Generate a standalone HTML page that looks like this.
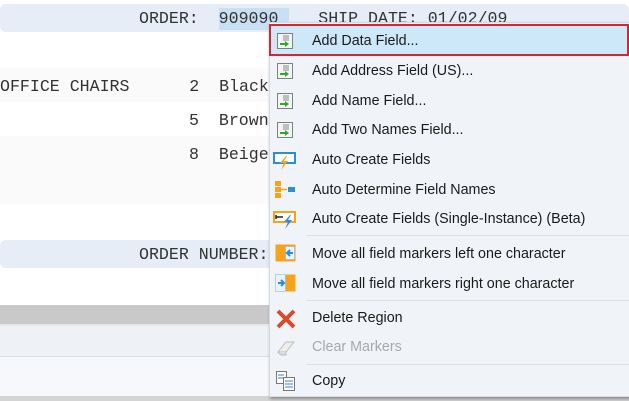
<!DOCTYPE html>
<html><head><meta charset="utf-8"><style>
*{margin:0;padding:0;box-sizing:border-box}
body{width:629px;height:401px;overflow:hidden;background:#fff;position:relative;font-family:"Liberation Sans",sans-serif}
.a{position:absolute}
.mono{font-family:"Liberation Mono",monospace;font-size:16.6px;color:#333;position:absolute;line-height:18px;white-space:pre}
.menu{position:absolute;left:269px;top:22px;width:362px;height:375px;background:#f0f4f9;border:1px solid #d6d9de;box-shadow:1px 2px 3px rgba(0,0,0,.35)}
.it{position:absolute;left:42px;font-size:14.3px;color:#1a1a1a;line-height:16px;font-family:"Liberation Sans","DejaVu Sans",sans-serif}
.sep{position:absolute;left:36px;right:0;height:1px;background:#dcdfe4}
.ic{position:absolute;left:6px}
</style></head><body>
<div class="a" style="left:0;top:4px;width:629px;height:28px;background:#e6edf6;border-radius:6px"></div>
<div class="a" style="left:0;top:68px;width:629px;height:34px;background:#fafafa"></div>
<div class="a" style="left:0;top:136px;width:629px;height:34px;background:#fafafa"></div>
<div class="a" style="left:0;top:170px;width:629px;height:34px;background:#fafafa"></div>
<div class="a" style="left:0;top:240px;width:629px;height:28px;background:#e6edf6;border-radius:6px"></div>
<div class="a" style="left:219px;top:8px;width:70px;height:22px;background:#c9dff4"></div>
<div class="mono" style="left:139px;top:10px">ORDER:  909090    SHIP DATE: 01/02/09</div>
<div class="mono" style="left:0;top:78px">OFFICE CHAIRS      2  Black</div>
<div class="mono" style="left:189px;top:112px">5  Brown</div>
<div class="mono" style="left:189px;top:146px">8  Beige</div>
<div class="mono" style="left:139px;top:246px">ORDER NUMBER:</div>
<div class="a" style="left:0;top:305px;width:629px;height:19px;background:#c9c9c9"></div>
<div class="a" style="left:0;top:324px;width:629px;height:2px;background:#e8e8e8"></div>
<div class="a" style="left:0;top:326px;width:629px;height:30px;background:#eef1f6"></div>
<div class="a" style="left:0;top:356px;width:629px;height:1px;background:#d8dbe0"></div>
<div class="a" style="left:0;top:357px;width:629px;height:39px;background:#f6f8fb"></div>
<div class="a" style="left:0;top:396px;width:629px;height:5px;background:#d4d4d4"></div>

<div class="menu">
 <div class="a" style="left:-1px;top:1px;width:360px;height:32px;background:#cde8f8;border:2px solid #d9262e"></div>
 <svg class="ic" style="top:9px" width="18" height="18"><rect x="1.5" y="1.5" width="15" height="15" fill="#f4f4f4" stroke="#808080"/><path d="M7 4h6M7 6h6M7 8h6" stroke="#888"/><path d="M4 11h5V9l4 3-4 3v-2H4z" fill="#2eaa2e"/></svg>
 <div class="it" style="top:10px">Add Data Field...</div>
 <svg class="ic" style="top:39px" width="18" height="18"><rect x="1.5" y="1.5" width="15" height="15" fill="#f4f4f4" stroke="#808080"/><path d="M7 4h6M7 6h6M7 8h6" stroke="#888"/><path d="M4 11h5V9l4 3-4 3v-2H4z" fill="#2eaa2e"/></svg>
 <div class="it" style="top:40px">Add Address Field (US)...</div>
 <svg class="ic" style="top:69px" width="18" height="18"><rect x="1.5" y="1.5" width="15" height="15" fill="#f4f4f4" stroke="#808080"/><path d="M7 4h6M7 6h6M7 8h6" stroke="#888"/><path d="M4 11h5V9l4 3-4 3v-2H4z" fill="#2eaa2e"/></svg>
 <div class="it" style="top:70px">Add Name Field...</div>
 <svg class="ic" style="top:98px" width="18" height="18"><rect x="1.5" y="1.5" width="15" height="15" fill="#f4f4f4" stroke="#808080"/><path d="M7 4h6M7 6h6M7 8h6" stroke="#888"/><path d="M4 11h5V9l4 3-4 3v-2H4z" fill="#2eaa2e"/></svg>
 <div class="it" style="top:99px">Add Two Names Field...</div>
 <svg class="ic" style="top:128px;left:3px" width="24" height="20"><rect x="1" y="2" width="21" height="10" fill="#fff" stroke="#2b8fd8" stroke-width="2"/><path d="M13 5l-6 7h4l-3 7 7-9h-4l3-5z" fill="#f7a21b"/></svg>
 <div class="it" style="top:129px">Auto Create Fields</div>
 <svg class="ic" style="top:157px;left:4px" width="24" height="20"><rect x="1" y="1" width="6" height="5" fill="#f7a21b"/><rect x="1" y="7" width="6" height="5" fill="#f7a21b"/><rect x="1" y="13" width="6" height="5" fill="#f7a21b"/><path d="M7 9.5h6" stroke="#f7a21b" stroke-width="1.5"/><rect x="14" y="7" width="7" height="5" fill="#2b8fd8"/></svg>
 <div class="it" style="top:159px">Auto Determine Field Names</div>
 <svg class="ic" style="top:187px;left:3px" width="24" height="20"><rect x="1" y="2" width="21" height="10" fill="#fff" stroke="#f7a21b" stroke-width="2"/><path d="M3 7h7M3 5v4" stroke="#222" stroke-width="1.5"/><path d="M17 5l-6 7h4l-3 7 7-9h-4l3-5z" fill="#2b8fd8"/></svg>
 <div class="it" style="top:188px">Auto Create Fields (Single-Instance) (Beta)</div>
 <div class="sep" style="top:212px"></div>
 <svg class="ic" style="top:221px;left:5px" width="22" height="20"><rect x="0.5" y="0.5" width="20" height="17" fill="#f7a21b"/><rect x="10.5" y="2.5" width="9" height="13" fill="#eaf2fb" stroke="#7ab0e0" stroke-dasharray="1 1"/><path d="M18 9h-5M15 6l-3 3 3 3" stroke="#2b8fd8" stroke-width="2" fill="none"/></svg>
 <div class="it" style="top:223px">Move all field markers left one character</div>
 <svg class="ic" style="top:251px;left:5px" width="22" height="20"><rect x="0.5" y="0.5" width="20" height="17" fill="#f7a21b"/><rect x="0.5" y="0.5" width="10" height="17" fill="#eaf2fb" stroke="#7ab0e0" stroke-dasharray="1 1"/><path d="M3 9h6M6 6l3 3-3 3" stroke="#2b8fd8" stroke-width="2" fill="none"/></svg>
 <div class="it" style="top:253px">Move all field markers right one character</div>
 <div class="sep" style="top:277px"></div>
 <svg class="ic" style="top:285px;left:5px" width="22" height="22"><path d="M3 3L19 19M19 3L3 19" stroke="#d9492c" stroke-width="4"/></svg>
 <div class="it" style="top:287px">Delete Region</div>
 <svg class="ic" style="top:315px;left:5px" width="22" height="20"><path d="M3 14l8-10h8l-8 10z" fill="#eee" stroke="#bbb"/><path d="M3 14l3 3h5l-0-3" fill="#ddd" stroke="#bbb"/></svg>
 <div class="it" style="top:316px;color:#a8a8a8">Clear Markers</div>
 <div class="sep" style="top:341px"></div>
 <svg class="ic" style="top:347px;left:5px" width="22" height="22"><rect x="1.5" y="1.5" width="10" height="12" fill="#fff" stroke="#777"/><path d="M3 5h6M3 8h6" stroke="#3a7fd0"/><rect x="8.5" y="7.5" width="11" height="13" fill="#fff" stroke="#777"/><path d="M10 11h8M10 14h8M10 17h8" stroke="#3a7fd0"/></svg>
 <div class="it" style="top:350px">Copy</div>
</div>
</body></html>
